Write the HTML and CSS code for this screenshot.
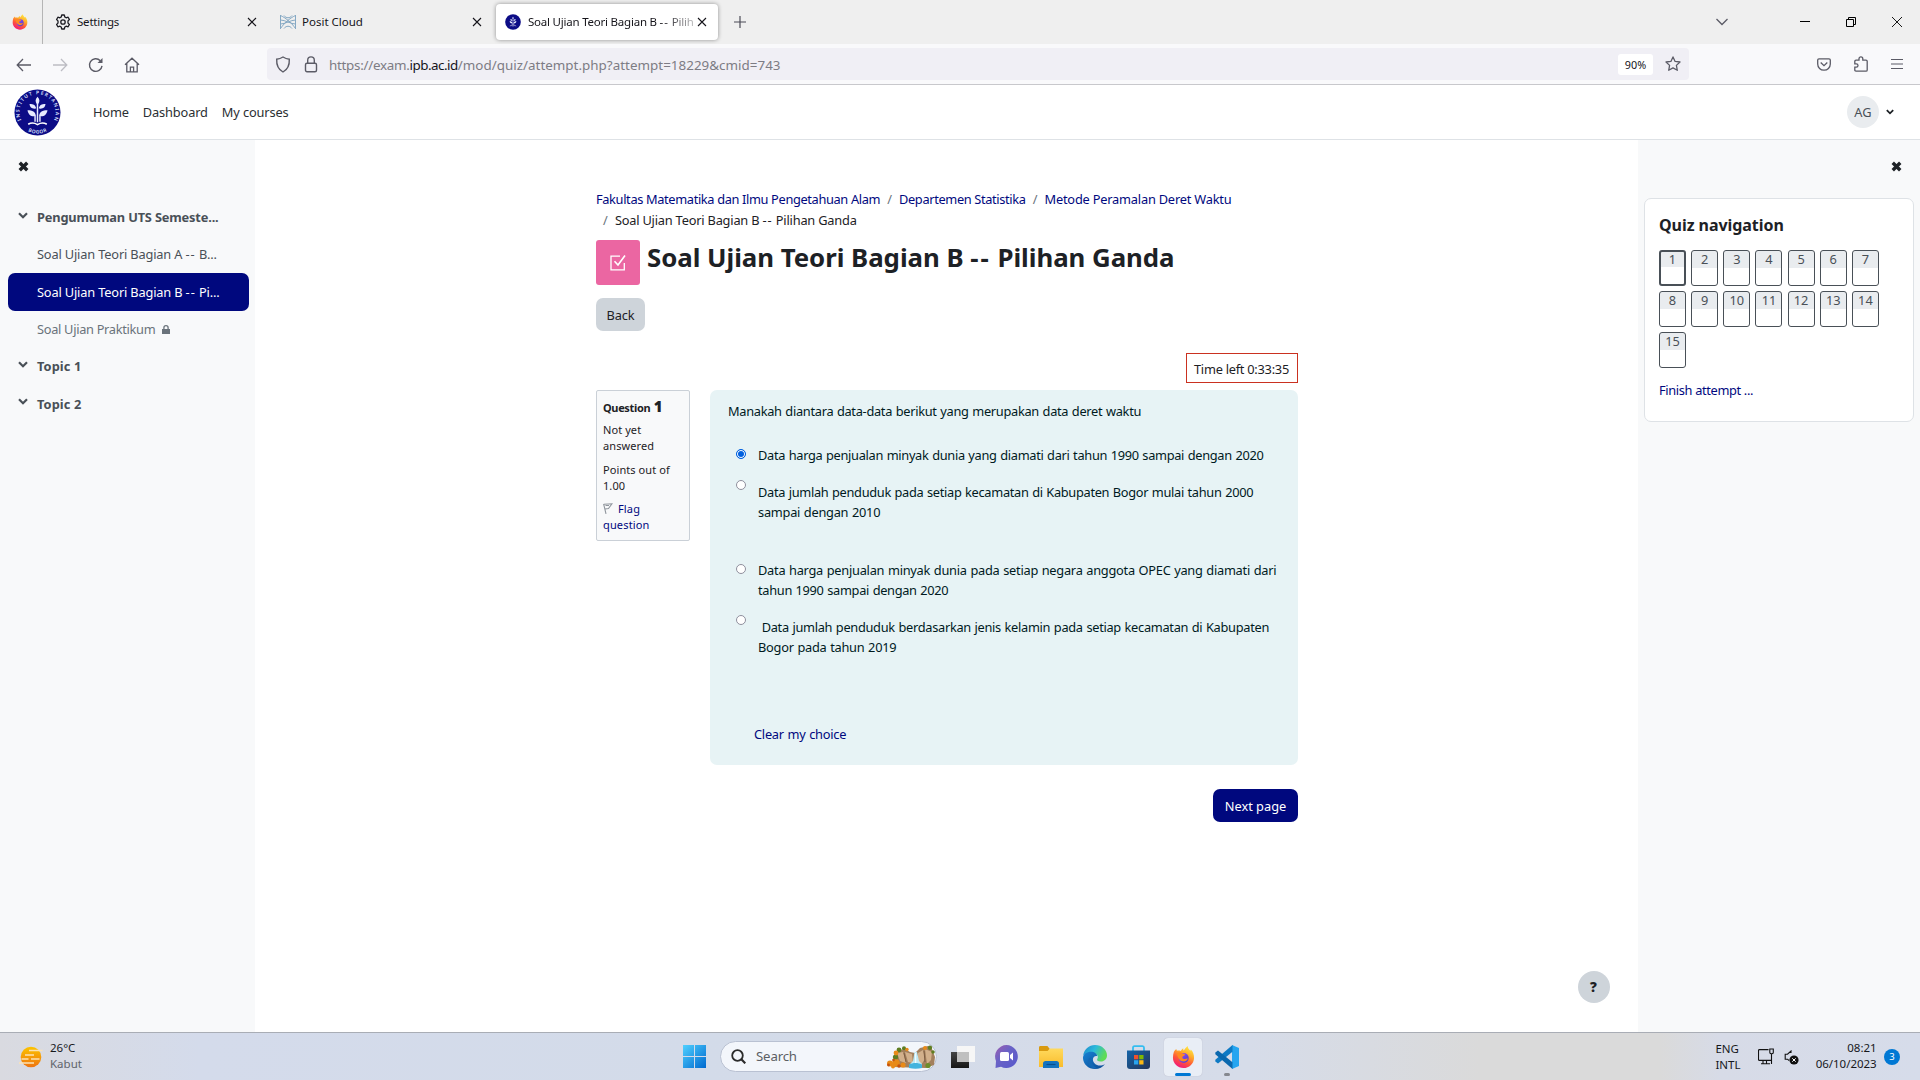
FILE: index.html
```html
<!DOCTYPE html>
<html lang="id">
<head>
<meta charset="utf-8">
<title>Soal Ujian Teori Bagian B -- Pilihan Ganda</title>
<link rel="stylesheet" href="styles.css">
</head>
<body>
<svg class="defs" width="0" height="0" aria-hidden="true">
  <defs>
    <linearGradient id="ffBody" x1="0.8" y1="0" x2="0.3" y2="1"><stop offset="0" stop-color="#fff04a"/><stop offset=".35" stop-color="#ffb02a"/><stop offset=".65" stop-color="#ff5a36"/><stop offset="1" stop-color="#f0157e"/></linearGradient>
    <linearGradient id="ffCore" x1="0" y1="0" x2="1" y2="1"><stop offset="0" stop-color="#a053f2"/><stop offset="1" stop-color="#4a3ad0"/></linearGradient>
    <linearGradient id="winBlue" gradientUnits="userSpaceOnUse" x1="0" y1="0" x2="23" y2="23"><stop offset="0" stop-color="#4fd0ff"/><stop offset="1" stop-color="#0069cf"/></linearGradient>
    <linearGradient id="chatFill" x1="0" y1="0" x2="1" y2="1"><stop offset="0" stop-color="#a05cae"/><stop offset=".4" stop-color="#6a63c6"/><stop offset="1" stop-color="#5658cc"/></linearGradient>
    <linearGradient id="folderFill" x1="0" y1="0" x2="0" y2="1"><stop offset="0" stop-color="#ffda5e"/><stop offset="1" stop-color="#f9bc2c"/></linearGradient>
    <linearGradient id="edgeTop" x1="0" y1="0" x2="1" y2=".4"><stop offset="0" stop-color="#1c86c9"/><stop offset=".5" stop-color="#2cb9dc"/><stop offset="1" stop-color="#5fdc55"/></linearGradient>
    <linearGradient id="edgeBase" x1="0" y1="0" x2="1" y2="1"><stop offset="0" stop-color="#1781d3"/><stop offset="1" stop-color="#0c4a94"/></linearGradient>
    <linearGradient id="storeFill" x1="0" y1="0" x2="1" y2="1"><stop offset="0" stop-color="#1464a8"/><stop offset="1" stop-color="#243559"/></linearGradient>
    <linearGradient id="darkFill" x1="0" y1="0" x2="0" y2="1"><stop offset="0" stop-color="#454545"/><stop offset="1" stop-color="#161616"/></linearGradient>
    <linearGradient id="fogFill" x1="0" y1="0" x2="0" y2="1"><stop offset="0" stop-color="#fcc400"/><stop offset="1" stop-color="#ee7410"/></linearGradient>
    <symbol id="firefox" viewBox="0 0 24 24">
      <path d="M2 6.5C3 5 3.800 4.200 4.500 3.600c.1.800.3 1.400.7 1.900 1.200-.3 2.700-.2 4 .3C9.800 4.300 10.600 3.300 11.800 3c-.2 1 0 1.700.5 2.200C13.200 3.600 14.500 2 16.300.5c.2 2.400 1.600 3.400 2.900 4.900.3-.3.4-.7.4-1.200 2.400 2.400 3.600 5.500 3.400 9C22.600 19 18 23.500 12 23.500S1 19 1 12.800c0-2.400.4-4.500 1-6.300z" fill="url(#ffBody)"/>
      <circle cx="12.200" cy="13" r="5.200" fill="url(#ffCore)"/>
      <path d="M5 8c2-1.500 4.500-1.300 6 .3 1.200.2 2.400.4 2.600 1.100.1 1-1.500 1.300-2.500 2-.8.700-.4 2.600 1.800 2.600 1.500 0 2.200-.6 3.600-.5-.6 2.300-3 3.500-5.500 3C7.200 15.600 5.700 11.500 5 8z" fill="#ff8a1f"/>
    </symbol>
    <symbol id="ipb" viewBox="0 0 48 48">
      <circle cx="24" cy="24" r="23.500" fill="#0c0c86"/>
      <path id="ringTop" d="M8 33.200A18.500 18.500 0 1 1 40 33.200" fill="none"/>
      <path id="ringBottom" d="M13 42.400A21.500 21.500 0 0 0 35 42.400" fill="none"/>
      <g fill="#e8ebff">
        <path d="M24 8c2.600 2.600 2.600 5.600 0 8-2.600-2.400-2.600-5.400 0-8z"/>
        <path d="M22.600 20c-4.600.6-6.300-1.200-6.800-4.600 4.200 0 6.300 1.200 6.800 4.600zM25.400 20c4.600.6 6.300-1.200 6.800-4.600-4.200 0-6.300 1.200-6.800 4.600z"/>
        <path d="M22.400 27.600c-5.400.8-7.700-1.400-8.600-6 5.200 0 8 1.500 8.600 6zM25.600 27.600c5.400.8 7.700-1.400 8.600-6-5.200 0-8 1.500-8.600 6z"/>
      </g>
      <path d="M24 14v20M21.500 27.500v6M26.500 27.500v6" stroke="#e8ebff" stroke-width="1.500" fill="none"/>
      <path d="M14.500 36c3-1.800 6.500-1.600 9.500.3 3-1.900 6.500-2.100 9.500-.3" stroke="#fff" stroke-width="1.600" fill="none"/>
    </symbol>
    <symbol id="chev" viewBox="0 0 10 7"><path d="M1 1.200 5 5.200 9 1.200" fill="none" stroke="currentColor" stroke-width="2.200"/></symbol>
    <symbol id="cross" viewBox="0 0 10 10"><path d="M1.600 1.600 8.400 8.400M8.400 1.600 1.600 8.400" stroke="currentColor" stroke-width="3.100" fill="none"/></symbol>
    <symbol id="thinx" viewBox="0 0 10 10"><path d="M1 1 9 9M9 1 1 9" stroke="currentColor" stroke-width="1.100" fill="none"/></symbol>
  </defs>
</svg>

<header class="tabs">
  <div class="pinned"><svg width="16" height="16"><use href="#firefox"/></svg></div>
  <div class="tab tab-first">
    <svg width="16" height="16" viewBox="0 0 16 16" fill="none" stroke="#1b1b22" stroke-width="1.300" stroke-linejoin="round"><path d="M6.700 1h2.600l.5 2 1.300.8 2-.6 1.300 2.300L13 6.900v2.200l1.400 1.400-1.300 2.300-2-.6-1.300.8-.5 2H6.700l-.5-2-1.300-.8-2 .6-1.300-2.300L3 9.100V6.900L1.600 5.500l1.300-2.300 2 .6L6.200 3z"/><circle cx="8" cy="8" r="2.200"/></svg>
    <span class="tab-name tab-settings">Settings</span>
    <svg class="tab-x" width="10" height="10"><use href="#thinx"/></svg>
  </div>
  <div class="tab">
    <svg width="16" height="16" viewBox="0 0 16 16" fill="none" stroke="#86a9c4" stroke-width="1"><path d="M.5 1v14M15.500 1v14M.5 1.500C5 3.500 11 8 15.500 14.500M15.500 1.500C11 3.500 5 8 .5 14.500M.5 6C5 6 11 10 15.500 10M.5 10C5 10 11 6 15.500 6M4 1.500c2 3 6 3 8 0M4 14.500c2-3 6-3 8 0"/></svg>
    <span class="tab-name">Posit Cloud</span>
    <svg class="tab-x" width="10" height="10"><use href="#thinx"/></svg>
  </div>
  <div class="tab tab-active">
    <svg width="16" height="16"><use href="#ipb"/></svg>
    <span class="tab-name tab-fade">Soal Ujian Teori Bagian B <span class="dash">--</span> Pilih</span>
    <svg class="tab-x" width="10" height="10"><use href="#thinx"/></svg>
  </div>
  <svg class="newtab" width="12" height="12" viewBox="0 0 12 12"><path d="M6 0v12M0 6h12" stroke="#4b4b57" stroke-width="1.200"/></svg>
  <div class="win">
    <svg width="12" height="8" viewBox="0 0 12 8" fill="none" stroke="#5b5b66" stroke-width="1.300"><path d="M.5 1 6 6.500 11.500 1"/></svg>
    <svg width="10" height="10" viewBox="0 0 10 10"><path d="M0 4.500h10" stroke="#000"/></svg>
    <svg width="10" height="10" viewBox="0 0 10 10" fill="none" stroke="#000"><path d="M.5 2.500h7v7h-7zM2.500 2.500V.5h7v7h-2"/></svg>
    <svg width="10" height="10" viewBox="0 0 10 10" stroke="#000" stroke-width=".9"><path d="M0 0 10 10M10 0 0 10"/></svg>
  </div>
</header>

<div class="toolbar">
  <div class="nav-icons">
    <svg width="16" height="16" viewBox="0 0 16 16" fill="none" stroke="#5b5b66" stroke-width="1.300"><path d="M15 8H1.500M7 2 1.200 8 7 14"/></svg>
    <svg width="16" height="16" viewBox="0 0 16 16" fill="none" stroke="#bdbdc4" stroke-width="1.300"><path d="M1 8h13.500M9 2l5.800 6L9 14"/></svg>
    <svg width="16" height="16" viewBox="0 0 16 16" fill="none" stroke="#5b5b66" stroke-width="1.400"><path d="M14 8.800A6.300 6.300 0 1 1 12.300 3.700"/><path d="M14.500 1v5H9.500z" fill="#5b5b66" stroke="none"/></svg>
    <svg width="16" height="16" viewBox="0 0 16 16" fill="none" stroke="#5b5b66" stroke-width="1.300"><path d="M1 7.800 8 1.200l7 6.600M2.800 6.500v8.300h10.400V6.500M6.400 14.500v-4.300h3.200v4.300"/></svg>
  </div>
  <div class="url">
    <svg width="16" height="17" viewBox="0 0 16 17" fill="none" stroke="#5b5b66" stroke-width="1.400"><path d="M8 1c2 1.300 4 2 6.300 2.200.3 5.300-1 9.800-6.300 12.800C2.700 13 1.400 8.500 1.700 3.200 4 3 6 2.300 8 1z"/></svg>
    <svg width="14" height="17" viewBox="0 0 14 17" fill="none" stroke="#5b5b66" stroke-width="1.400"><rect x="1.500" y="7.200" width="11" height="8.600" rx="1.500"/><path d="M3.700 7V4.200a3.300 3.300 0 0 1 6.600 0V7"/></svg>
    <span class="address"><span class="proto">https://exam.</span><b>ipb.ac.id</b><span>/mod/quiz/attempt.php?attempt=18229&amp;cmid=743</span></span>
    <span class="zoom">90%</span>
    <svg width="16" height="16" viewBox="0 0 16 16" fill="none" stroke="#5b5b66" stroke-width="1.300" stroke-linejoin="round"><path d="m8 .9 2.100 4.500 4.900.6-3.600 3.400.9 4.900L8 11.900l-4.300 2.400.9-4.900L1 6l4.900-.6z"/></svg>
  </div>
  <div class="ext">
    <svg width="14" height="13" viewBox="0 0 14 13" fill="none" stroke="#5b5b66" stroke-width="1.300"><path d="M2 .8h10c.8 0 1.300.5 1.300 1.200v4A6.200 6.200 0 0 1 7 12.200 6.200 6.200 0 0 1 .7 6V2C.7 1.300 1.200.8 2 .8z"/><path d="M3.700 4.500 7 7.600l3.300-3.100"/></svg>
    <svg width="14" height="16" viewBox="0 0 14 16" fill="none" stroke="#5b5b66" stroke-width="1.300"><path d="M5 4.200V2.800a1.900 1.900 0 0 1 3.800 0v1.400h3.200c.8 0 1.200.4 1.200 1.100v8.600c0 .8-.4 1.200-1.200 1.200H2c-.8 0-1.200-.4-1.200-1.200v-2.700h1.500a1.700 1.700 0 0 0 0-3.400H.8V5.300c0-.7.4-1.100 1.200-1.100z"/></svg>
    <svg width="12" height="12" viewBox="0 0 12 12" stroke="#5b5b66" stroke-width="1.200"><path d="M0 1.500h12M0 6h12M0 10.500h12"/></svg>
  </div>
</div>

<nav class="site">
  <svg class="logo" width="47" height="47" viewBox="0 0 48 48"><use href="#ipb"/><text class="ring" textLength="74"><textPath href="#ringTop" startOffset="1.500" textLength="74">INSTITUT PERTANIAN</textPath></text><text class="ring"><textPath href="#ringBottom" startOffset="1.500" textLength="20">BOGOR</textPath></text></svg>
  <a>Home</a><a>Dashboard</a><a>My courses</a>
  <div class="user"><span class="avatar">AG</span><svg width="8" height="6"><use href="#chev"/></svg></div>
</nav>

<div class="page">
  <aside class="index">
    <svg class="close" width="11" height="11"><use href="#cross"/></svg>
    <div class="row sec"><svg width="10" height="7"><use href="#chev"/></svg><span>Pengumuman UTS Semeste...</span></div>
    <div class="row"><span>Soal Ujian Teori Bagian A <span class="dash">--</span> B...</span></div>
    <div class="row on"><span>Soal Ujian Teori Bagian B <span class="dash">--</span> Pi...</span></div>
    <div class="row dim"><span>Soal Ujian Praktikum</span><svg width="8" height="9" viewBox="0 0 8 9"><path d="M0 4h8v5H0z" fill="#6a737b"/><path d="M1.900 4.500V2.800a2.100 2.100 0 0 1 4.200 0v1.700" fill="none" stroke="#6a737b" stroke-width="1.300"/></svg></div>
    <div class="row sec topic"><svg width="10" height="7"><use href="#chev"/></svg><span>Topic 1</span></div>
    <div class="row sec topic"><svg width="10" height="7"><use href="#chev"/></svg><span>Topic 2</span></div>
  </aside>

  <main class="main">
    <div class="crumbs">
      <div><a>Fakultas Matematika dan Ilmu Pengetahuan Alam</a><i>/</i><a>Departemen Statistika</a><i>/</i><a class="loose">Metode Peramalan Deret Waktu</a></div>
      <div><i>/</i><span class="here">Soal Ujian Teori Bagian B <span class="dash">--</span> Pilihan Ganda</span></div>
    </div>
    <div class="head">
      <div class="quiz-icon"><svg width="18" height="18" viewBox="0 0 18 18" fill="none" stroke="#fff" stroke-width="1.300"><path d="M11 2.200H2v13.600h13.300V9"/><path d="m5.500 7.200 3.500 3.800 7-9.400" stroke-width="1.600"/></svg></div>
      <h1>Soal Ujian Teori Bagian B <span class="dash">--</span> Pilihan Ganda</h1>
    </div>
    <button class="back">Back</button>
    <div class="timer">Time left 0:33:35</div>
    <div class="que">
      <div class="info">
        <h3><span>Question</span> <b>1</b></h3>
        <p>Not yet<br>answered</p>
        <p>Points out of<br>1.00</p>
        <p class="flag"><svg width="10" height="11" viewBox="0 0 10 11" fill="none" stroke="#8f959c" stroke-width="1.100"><path d="M.6.800 3 10.800M.8 1.200 9 .8 5.500 5.600 2 6M2.500 2.500l3.500 0"/></svg>Flag<br>question</p>
      </div>
      <div class="body">
        <p class="ask">Manakah diantara data-data berikut yang merupakan data deret waktu</p>
        <div class="opt o1"><span class="radio sel"></span><div>Data harga penjualan minyak dunia yang diamati dari tahun 1990 sampai dengan 2020</div></div>
        <div class="opt o2"><span class="radio"></span><div>Data jumlah penduduk pada setiap kecamatan di Kabupaten Bogor mulai tahun 2000<br><span class="snug">sampai dengan 2010</span></div></div>
        <div class="opt o3"><span class="radio"></span><div><span class="snug">Data harga penjualan minyak dunia pada setiap negara anggota OPEC yang diamati dari</span><br>tahun 1990 sampai dengan 2020</div></div>
        <div class="opt o4"><span class="radio"></span><div>&nbsp;<span class="even">Data jumlah penduduk berdasarkan jenis kelamin pada setiap kecamatan di Kabupaten</span><br><span class="snug">Bogor pada tahun 2019</span></div></div>
        <a class="clear">Clear my choice</a>
      </div>
    </div>
    <button class="next">Next page</button>
    <div class="help">?</div>
  </main>

  <aside class="drawer">
    <svg class="close" width="11" height="11"><use href="#cross"/></svg>
    <section class="card">
      <h2>Quiz navigation</h2>
      <div class="nums">
        <a class="cur">1</a><a>2</a><a>3</a><a>4</a><a>5</a><a>6</a><a>7</a><a>8</a><a>9</a><a>10</a><a>11</a><a>12</a><a>13</a><a>14</a><a>15</a>
      </div>
      <a class="finish">Finish attempt ...</a>
    </section>
  </aside>
</div>

<footer class="taskbar">
  <div class="weather">
    <svg width="24" height="22" viewBox="0 0 24 22"><circle cx="12" cy="11" r="10.300" fill="url(#fogFill)"/><path d="M10 4.500h13.500M6 9h9M2.500 13h7M12 13h8.500M0 17h15" stroke="#fbe2b4" stroke-width="1.600"/></svg>
    <div class="weather-text">26°C<br><span class="muted">Kabut</span></div>
  </div>
  <svg width="23" height="23" viewBox="0 0 23 23"><path d="M0 0h11v11H0zM12 0h11v11H12zM0 12h11v11H0zM12 12h11v11H12z" fill="url(#winBlue)"/></svg>
  <div class="search">
    <svg width="15" height="15" viewBox="0 0 15 15" fill="none" stroke="#2b2b2b" stroke-width="1.800"><circle cx="6.500" cy="6.500" r="5.300"/><path d="m10.300 10.300 4 4" stroke-width="2.200"/></svg>
    <span>Search</span>
    <svg class="falls" width="49" height="24" viewBox="0 0 49 24">
      <path d="M6 22 9 9l3-4 7-1 5 3 5 1 5-5 8-2 4 3 3 8-1 8-8 3z" fill="#a3805d"/>
      <path d="M11 8l6-1 3 11-6-2zM19 7l7 2 1 9-5-1zM32 8l5-3 2 9-4 6-3-4zM39 4l7 3-1 8-4 4z" fill="#d2b08b"/>
      <path d="M18 8l2 9M38 6l1 11" stroke="#7d5d42" stroke-width="1"/>
      <path d="M28.500 7h2.500l2 9 3 3v4H24v-4l3-3z" fill="#bfeaf5"/><path d="M23 19.500c4-2 9-2 13 0V23c-4 1-9 1-13 0z" fill="#42b4de"/><path d="M29.700 8v10" stroke="#fff"/>
      <g fill="#5f7d22"><circle cx="13" cy="5" r="2.400"/><circle cx="18" cy="3.200" r="2"/><circle cx="44" cy="2.800" r="2.200"/><circle cx="47" cy="7" r="1.800"/><circle cx="9.500" cy="12" r="2.600"/></g>
      <g fill="#e88a18"><circle cx="10" cy="8" r="2.400"/><circle cx="21" cy="4.500" r="1.700"/><circle cx="39" cy="3" r="2"/><circle cx="4" cy="18.500" r="3"/><circle cx="10" cy="18" r="3.800"/><circle cx="17" cy="20" r="2.600"/><circle cx="7" cy="21.500" r="2"/></g>
      <g fill="#c4520f"><circle cx="2.500" cy="20" r="1.400"/><circle cx="13" cy="21" r="1.700"/><circle cx="7.500" cy="15" r="1.300"/></g>
      <circle cx="42" cy="20.500" r="2.600" fill="#6c8d2a"/>
    </svg>
  </div>
  <svg class="app" width="24" height="22" viewBox="0 0 24 22"><path d="M0 6h18v16H0z" fill="url(#darkFill)"/><path d="M6 0h18v16H6z" fill="#f6f6f6"/><path d="M6 6h12v10H6z" fill="#c0c0c0"/></svg>
  <svg class="app gap" width="23" height="23" viewBox="0 0 23 23"><path d="M11.500 0A11.500 11.500 0 1 1 6 21.700L.5 23 1 16A11.500 11.500 0 0 1 11.500 0z" fill="url(#chatFill)"/><rect x="5" y="7" width="9" height="9" rx="1.500" fill="#fff"/><path d="M15 10l3-2.500v8L15 13z" fill="#fff"/></svg>
  <svg class="app gap" width="24" height="22" viewBox="0 0 24 22"><path d="M0 1.500C0 .6.500 0 1.400 0h7l2 2.500V6H0z" fill="#d99a10"/><path d="M0 5h8.500L11 2.500h13V21H0z" fill="url(#folderFill)"/><path d="M4 22v-4.500C4 16 5 15 6.500 15h11c1.500 0 2.500 1 2.500 2.500V22z" fill="#1573be"/><path d="M7.500 18.500h9" stroke="#0b4f8c" stroke-width="1.200"/></svg>
  <svg class="app gap" width="24" height="24" viewBox="0 0 24 24"><path d="M.2 10.500C1 4.500 6 0 12 0c7 0 12 5 12 10.200 0 4-3 6.300-6.500 6.300-2.600 0-4-1.200-3.300-2.200 1.300-1.700.9-4.800-2.700-6C7 7 2.500 8 .2 10.500z" fill="url(#edgeTop)"/><path d="M0 12.500C.3 9 3.800 6.800 8 6.800c3.500 0 6 2 6.200 4.200-4-.8-6 4 -2.500 7.500 2.800 2.700 7 2.500 10.300.4C20 22 16.300 24 12 24 5 24-.2 18.500 0 12.500z" fill="url(#edgeBase)"/><path d="M8.500 12c-1.500 4.500 1.500 9.500 6.500 11.500C8 24.500 3 19 5.500 14.500c.8-1.400 1.800-2.200 3-2.500z" fill="#1468b4"/></svg>
  <svg class="app gap" width="23" height="24" viewBox="0 0 23 24"><path d="M6 7V2.800C6 1.800 6.500 1.200 7.500 1.200h8c1 0 1.500.6 1.500 1.600V7" fill="none" stroke="#35bdf0" stroke-width="1.800"/><path d="M0 5.500h23V21c0 1.800-1 3-3 3H3c-2 0-3-1.200-3-3z" fill="url(#storeFill)"/><path d="M7 10h4.300v4.300H7z" fill="#f0502c"/><path d="M12.200 10h4.300v4.300h-4.300z" fill="#7fb900"/><path d="M7 15.200h4.300v4.300H7z" fill="#2aa5ee"/><path d="M12.200 15.200h4.300v4.300h-4.300z" fill="#fcb813"/></svg>
  <div class="tile"><svg width="23" height="24"><use href="#firefox"/></svg></div>
  <div class="vs"><svg width="24" height="24" viewBox="0 0 24 24"><path d="M17 0 24 3v18l-7 3z" fill="#25a5f0"/><path d="M17.500 0v6.800L3 18.500.3 16.500v-1.800z" fill="#0f7ac4"/><path d="M17.500 24v-6.800L3 5.500.3 7.500v1.800z" fill="#0b68ae"/></svg></div>
  <div class="tray">
    <div>ENG<br>INTL</div>
    <svg width="16" height="17" viewBox="0 0 16 17" fill="none" stroke="#111" stroke-width="1.100"><path d="M10.500 1.600H1.500c-.6 0-1 .4-1 1v8.800c0 .6.400 1 1 1h12M5 12.500v3M8.500 12.500v3M3 15.800h9M11.800 1h3.500v3.500c0 .8-.6 1.300-1.700 1.300s-1.800-.5-1.800-1.300zM13.500 6v10"/></svg>
    <svg class="vol" width="15" height="15" viewBox="0 0 15 15"><path d="M7 3V1L3.500 4.200H1.200v5H3.500l1.500 1.300" fill="none" stroke="#111" stroke-width="1.100"/><circle cx="10" cy="10" r="4.600" fill="#111"/><path d="m8.300 8.300 3.400 3.400M11.700 8.300 8.300 11.700" stroke="#fff"/></svg>
    <div class="clock">08:21<br>06/10/2023</div>
    <span class="count">3</span>
  </div>
</footer>
</body>
</html>
```
FILE: styles.css
```css
* { box-sizing: border-box; }
body { margin: 0; width: 1920px; height: 1080px; overflow: hidden; display: flex; flex-direction: column; font-family: "Noto Sans", sans-serif; font-size: 12.8px; line-height: 20px; color: #1d2125; background: #fff; white-space: nowrap; }
svg { display: block; flex: none; }
h1, h2, h3, p { margin: 0; }
a { color: #00087e; }
button { border: 0; font: inherit; padding: 0; }
.defs { position: absolute; }
.dash { letter-spacing: 1px; }

.tabs { height: 44px; background: #efefef; display: flex; align-items: center; flex: none; font-size: 11.5px; color: #15141a; }
.pinned { width: 43px; height: 44px; border-right: 1px solid #b5b5b5; padding: 14px 0 0 12px; }
.tab { width: 225px; height: 36px; display: flex; align-items: center; gap: 6px; padding: 0 12px 0 11px; }
.tab-first { width: 226px; padding-left: 12px; }
.tab-name { flex: 1; }
.tab-settings { letter-spacing: -.2px; }
.tab-active { width: 222px; margin-left: 2px; padding: 0 11px 0 9px; gap: 7px; background: #fff; border-radius: 4px; box-shadow: 0 0 4px rgba(0,0,0,.4); }
.tab-active .tab-x { margin-left: -5px; }
.tab-fade { letter-spacing: -.22px; -webkit-mask-image: linear-gradient(to right, #000 80%, rgba(0,0,0,.25)); mask-image: linear-gradient(to right, #000 80%, rgba(0,0,0,.25)); }
.newtab { margin-left: 16px; }
.win { margin-left: auto; display: flex; align-items: center; padding-right: 18px; gap: 36px; }
.win svg:first-child { margin-right: 36px; }

.toolbar { height: 41px; background: #f9f9fb; border-bottom: 1px solid #c8c8cc; display: flex; align-items: center; flex: none; }
.nav-icons { width: 267px; display: flex; gap: 20px; padding: 1px 0 0 16px; }
.url { width: 1422px; height: 32px; background: #f0eff5; border-radius: 4px; display: flex; align-items: center; padding: 0 8px; }
.url > svg:nth-child(2) { margin-left: 13px; }
.address { flex: 1; padding: 2px 0 0 11px; font-size: 13.4px; color: #7d7c84; }
.address span:last-child { letter-spacing: .02px; }
.address .proto { letter-spacing: -.28px; }
.address b { font-weight: 400; color: #15141a; letter-spacing: -.5px; }
.zoom { background: #fff; border-radius: 3px; width: 35px; height: 21px; margin-right: 12px; text-align: center; font-size: 10.8px; line-height: 22px; color: #15141a; }
.ext { margin-left: auto; display: flex; align-items: center; gap: 23px; padding-right: 17.500px; }

.site { height: 55px; border-bottom: 1px solid #dee2e6; display: flex; align-items: center; flex: none; padding: 0 26px 0 14px; letter-spacing: -.14px; }
.site a { color: #2b2f33; margin-right: 14px; }
.logo { margin-right: 32px; }
.ring { fill: #dfe3ff; font-size: 5px; font-weight: 600; letter-spacing: 0; }
.user { margin-left: auto; display: flex; align-items: center; gap: 7px; }
.avatar { width: 32px; height: 32px; border-radius: 50%; background: #e9ecef; text-align: center; line-height: 33px; letter-spacing: .2px; color: #495057; }

.page { flex: 1; display: flex; min-height: 0; }
.index { width: 255px; background: #f8f9fa; padding: 21px 6px 0 8px; color: #495057; letter-spacing: -.16px; }
.index .close { margin: 0 0 26.400px 10px; color: #1d2125; }
.row { height: 37.400px; display: flex; align-items: center; padding-left: 29px; border-radius: 7px; }
.sec { font-weight: 700; padding-left: 10px; gap: 9px; }
.sec svg { margin-bottom: 4px; }
.topic { letter-spacing: .1px; padding-bottom: 1px; }
.on { background: #00087e; color: #fff; }
.dim { color: #6a737b; gap: 7px; letter-spacing: -.3px; }

.main { width: 1383px; padding: 48.500px 340px 0 341px; display: flex; flex-direction: column; position: relative; }
.crumbs { line-height: 21px; height: 51.500px; letter-spacing: -.35px; }
.crumbs i { font-style: normal; color: #6a737b; padding: 0 7px; letter-spacing: .1px; }
.loose, .here { letter-spacing: -.2px; }
.head { display: flex; gap: 7px; height: 45px; }
.quiz-icon { width: 44px; height: 45px; border-radius: 3px; background: #eb66a2; display: grid; place-items: center; }
h1 { font-size: 25.800px; line-height: 34px; letter-spacing: -.03px; }
h1 .dash { letter-spacing: 2px; }
.back { margin-top: 13px; width: 49px; height: 33px; border-radius: 7px; background: #ced4da; color: #1d2125; letter-spacing: -.15px; }
.timer { align-self: flex-end; margin-top: 22px; width: 112px; height: 30px; border: 1px solid #ca3120; padding: 5px 7px; letter-spacing: -.25px; }
.que { display: flex; gap: 20px; margin-top: 7px; align-items: flex-start; }
.info { width: 94px; height: 151px; border: 1px solid #cad0d7; border-radius: 2px; background: #f8f9fa; padding: 6.600px 6px; font-size: 11px; line-height: 16px; letter-spacing: .08px; }
.info h3 { font-size: 11px; line-height: 20px; margin-bottom: 4px; letter-spacing: -.35px; }
.info h3 b { font-size: 15px; line-height: 16px; margin-left: 1px; }
.info p { margin-bottom: 8px; }
.info .flag { color: #00087e; letter-spacing: .15px; margin-top: -1px; }
.flag svg { display: inline-block; margin-right: 5px; vertical-align: -1px; }
.body { flex: 1; height: 375px; background: #e7f3f5; border-radius: 7px; padding: 11px 18px; color: #001a1e; letter-spacing: -.31px; word-spacing: .6px; }
.ask { margin-bottom: 24px; letter-spacing: -.295px; }
.snug { letter-spacing: -.25px; }
.even { letter-spacing: -.295px; }
.opt { display: flex; padding-left: 8px; gap: 12px; }
.radio { width: 10px; height: 10px; border: 1px solid #8f8f9d; border-radius: 50%; background: #fff; margin-top: 4px; }
.sel { border-color: #0060df; background: #0060df; box-shadow: inset 0 0 0 1px #fff; }
.o1 { height: 30px; }
.o2 { height: 85px; }
.o3 { height: 50px; }
.o4 { height: 114px; }
.o2 .radio, .o4 .radio { margin-top: 5px; }
.o2 div, .o4 div { padding-top: 7px; }
.clear { margin-left: 26px; letter-spacing: -.25px; }
.next { align-self: flex-end; margin-top: 24px; width: 85px; height: 33px; border-radius: 7px; background: #00087e; color: #fff; }
.help { position: absolute; right: 28.500px; bottom: 29px; width: 32px; height: 32px; border-radius: 50%; background: #ced4da; text-align: center; font-weight: 900; font-size: 13.500px; line-height: 32px; }

.drawer { flex: 1; background: #f8f9fa; padding: 21px 6.500px 0 6px; }
.drawer .close { margin: 0 12px 26px auto; }
.card { height: 224px; border: 1px solid #dee2e6; border-radius: 7px; background: #fff; padding: 15px 14px 0; }
h2 { font-size: 16px; line-height: 22px; margin-bottom: 14px; letter-spacing: -.06px; }
.nums { display: grid; grid-template-columns: repeat(7, 27px); grid-auto-rows: 35.500px; gap: 5.600px 5.170px; margin-bottom: 12px; }
.nums a { border: 1px solid #495057; border-radius: 3px; text-align: center; line-height: 16px; color: #495057; background: linear-gradient(#e9ecef 17px, #fff 17px); }
.nums .cur { border-width: 2px; line-height: 14px; background: linear-gradient(#e9ecef 15px, #fff 15px); }
.finish { letter-spacing: -.34px; }

.taskbar { height: 48px; flex: none; border-top: 1px solid #a9adb5; background: linear-gradient(to right, #d9dae0 0, #d4dbeb 200px, #d3dbe9 700px, #d6dce9 1250px, #dadada 1480px, #dadada 1660px, #d7dbe7 1720px, #d6dcea 1920px); display: flex; align-items: center; font-size: 11.5px; line-height: 16px; color: #16181c; }
.weather { width: 683px; display: flex; align-items: center; gap: 7px; padding-left: 19px; }
.weather-text { padding-bottom: 2px; }
.muted { color: #60646c; }
.search { width: 217px; height: 31px; margin: 0 14px; border: 1px solid #b9c1d2; border-radius: 16px; background: #f3f6fb; display: flex; align-items: center; gap: 10px; padding: 0 0 0 10px; font-size: 13.200px; color: #5b5e64; }
.search span { letter-spacing: -.15px; padding-bottom: 1px; }
.falls { margin: 1px 1px 0 auto; }
.gap { margin-left: 20.300px; }
.tile { width: 38px; height: 38px; margin: 0 13px 0 14px; border-radius: 4px; background: #e9eef6; box-shadow: 0 0 1px #aab; display: grid; place-items: center; position: relative; }
.tile::after { content: ""; position: absolute; left: 11px; bottom: 0; width: 16px; height: 3px; border-radius: 2px; background: #0078d4; }
.vs { position: relative; }
.vs::after { content: ""; position: absolute; left: 9px; bottom: -7px; width: 6px; height: 3px; border-radius: 2px; background: #85888f; }
.tray { margin-left: auto; display: flex; align-items: center; padding-right: 20px; }
.tray > svg { margin-left: 17px; }
.tray .vol { margin: 2px 0 0 10px; }
.clock { margin-left: 16px; text-align: right; width: 62px; letter-spacing: -.05px; padding-bottom: 2px; }
.count { margin-left: 7.500px; width: 16px; height: 16px; border-radius: 50%; background: #0078d4; color: #fff; font-size: 9.500px; text-align: center; line-height: 16px; }
```
